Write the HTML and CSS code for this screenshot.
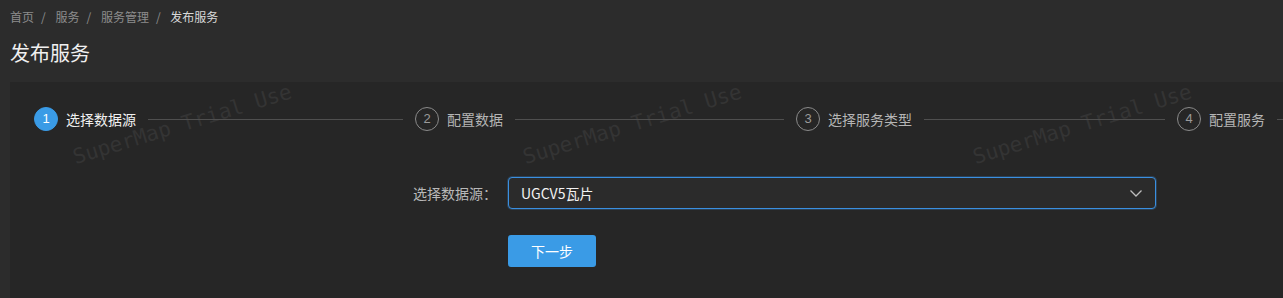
FILE: index.html
```html
<!DOCTYPE html>
<html lang="zh-CN">
<head>
    <meta charset="UTF-8">
    <meta name="viewport" content="width=device-width, initial-scale=1.0">
    <title>发布服务</title>
    <link rel="stylesheet" href="styles.css">
</head>
<body>
    <div class="breadcrumb">
        <span class="crumb">首页</span><span class="sep">/</span>
        <span class="crumb">服务</span><span class="sep">/</span>
        <span class="crumb">服务管理</span><span class="sep">/</span>
        <span class="crumb current">发布服务</span>
    </div>
    <h1 class="page-title">发布服务</h1>

    <div class="card">
        <div class="watermark">
            <span>SuperMap Trial Use</span>
            <span>SuperMap Trial Use</span>
            <span>SuperMap Trial Use</span>
        </div>

        <div class="steps">
            <div class="step active">
                <span class="step-icon">1</span>
                <span class="step-title">选择数据源</span>
                <span class="step-tail"></span>
            </div>
            <div class="step">
                <span class="step-icon">2</span>
                <span class="step-title">配置数据</span>
                <span class="step-tail"></span>
            </div>
            <div class="step">
                <span class="step-icon">3</span>
                <span class="step-title">选择服务类型</span>
                <span class="step-tail"></span>
            </div>
            <div class="step">
                <span class="step-icon">4</span>
                <span class="step-title">配置服务</span>
                <span class="step-tail"></span>
            </div>
        </div>

        <div class="form-row">
            <label class="form-label">选择数据源：</label>
            <div class="select">
                <span>UGCV5瓦片</span>
                <svg class="arrow" width="14" height="14" viewBox="0 0 14 14">
                    <path d="M1.5 4.5 L7 10 L12.5 4.5" fill="none" stroke="#bdbdbd" stroke-width="1.3"/>
                </svg>
            </div>
        </div>
        <div class="form-row actions">
            <button class="btn-primary">下一步</button>
        </div>
    </div>
</body>
</html>
```

FILE: styles.css
```css
html, body {
    margin: 0;
    padding: 0;
    overflow: hidden;
}
body {
    background-color: #2c2c2c;
    color: #e6e6e6;
    font-family: "Microsoft YaHei", "Noto Sans CJK SC", "Liberation Sans", sans-serif;
    font-size: 14px;
}
.breadcrumb {
    padding: 8px 10px 0;
    height: 20px;
    line-height: 18px;
    font-size: 12px;
    color: #8c8c8c;
}
.breadcrumb .sep {
    margin: 0 7px;
    color: #8c8c8c;
}
.breadcrumb .current {
    color: #d9d9d9;
}
.page-title {
    margin: 12px 10px 0;
    height: 42px;
    font-size: 20px;
    font-weight: normal;
    line-height: 26px;
    color: #f0f0f0;
}
.card {
    position: relative;
    margin-left: 10px;
    width: 1600px;
    height: 220px;
    background-color: #262626;
    padding: 24px 24px 0;
    box-sizing: border-box;
}
.watermark {
    position: absolute;
    left: 0;
    top: 0;
    width: 1400px;
    height: 100%;
    pointer-events: none;
    display: flex;
    padding: 0 0 0 67px;
    box-sizing: border-box;
}
.watermark span {
    display: block;
    flex: 0 0 450px;
    white-space: nowrap;
    font-family: "DejaVu Sans Mono", "Liberation Mono", monospace;
    font-size: 21px;
    line-height: 24px;
    color: #343434;
    transform: rotate(-17deg);
    transform-origin: 0 100%;
    height: 24px;
    margin-top: 63px;
}
.steps {
    position: relative;
    display: flex;
    width: 1524px;
    height: 26px;
}
.step {
    flex: 1;
    display: flex;
    align-items: center;
}
.step-icon {
    width: 22px;
    height: 22px;
    border: 1px solid #8a8a8a;
    border-radius: 50%;
    color: #9a9a9a;
    font-family: "Liberation Sans", Arial, sans-serif;
    font-size: 13px;
    line-height: 22px;
    text-align: center;
    flex-shrink: 0;
}
.step-title {
    margin-left: 8px;
    color: #b5b5b5;
    white-space: nowrap;
    font-size: 14px;
}
.step-tail {
    flex: 1;
    height: 1px;
    background-color: #4f4f4f;
    margin: 0 12px;
}
.step.active .step-icon {
    background-color: #3a9be6;
    border-color: #3a9be6;
    color: #ffffff;
}
.step.active .step-title {
    color: #f0f0f0;
}
.form-row {
    position: relative;
    display: flex;
    align-items: center;
    margin-top: 45px;
    padding-left: 364px;
}
.form-label {
    width: 99px;
    text-align: right;
    color: #b8b8b8;
    margin-right: 11px;
    font-size: 14px;
}
.select {
    width: 622px;
    height: 30px;
    border: 1px solid #3a8fe0;
    border-radius: 4px;
    box-shadow: 0 0 0 1px rgba(58, 143, 224, 0.25);
    background-color: #2b2b2b;
    display: flex;
    align-items: center;
    justify-content: space-between;
    padding: 0 12px;
    box-sizing: content-box;
    color: #f2f2f2;
    font-size: 14px;
}
.actions {
    margin-top: 26px;
    padding-left: 474px;
}
.btn-primary {
    width: 88px;
    height: 32px;
    background-color: #3a9be6;
    color: #ffffff;
    border: none;
    border-radius: 3px;
    font-family: inherit;
    font-size: 14px;
    cursor: pointer;
}
```
